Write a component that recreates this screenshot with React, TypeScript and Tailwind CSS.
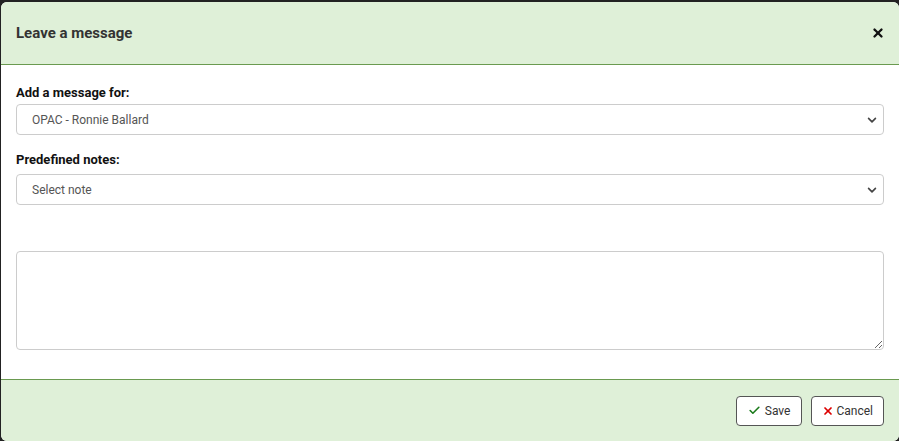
import { Check, X } from 'lucide-react';

function Chevron() {
  return (
    <svg width="10" height="10" viewBox="0 0 16 16" className="text-[#444]">
      <path d="M2.5 5.5l5.5 5.5 5.5-5.5" fill="none" stroke="currentColor" strokeWidth="2.6" strokeLinecap="round" strokeLinejoin="round" />
    </svg>
  );
}

function FakeSelect({ value }: { value: string }) {
  return (
    <div className="flex h-[31px] items-center justify-between rounded-[4px] border border-[#ccc] bg-white pl-[15px] pr-[6px] text-[12px] text-[#555]">
      <span>{value}</span>
      <Chevron />
    </div>
  );
}

export default function App() {
  return (
    <div className="h-[441px] w-[899px] bg-[#222] pl-px pt-[2px] font-['Roboto',sans-serif]">
      <div className="flex h-[439px] flex-col overflow-hidden rounded-[6px] bg-white">
        {/* Header */}
        <div className="flex h-[63px] shrink-0 items-center justify-between border-b border-[#6a9a50] bg-[#dff0d8] pl-[15px] pr-[14px]">
          <h1 className="text-[15px] font-bold text-[#333]">Leave a message</h1>
          <X size={14} strokeWidth={4} className="text-[#111]" />
        </div>

        {/* Body */}
        <div className="flex flex-1 flex-col px-[15px] pt-[20px]">
          <label className="mb-[4px] text-[13px] leading-[15px] font-bold text-[#111]">Add a message for:</label>
          <FakeSelect value="OPAC - Ronnie Ballard" />
          <label className="mb-[7px] mt-[17px] text-[13px] leading-[15px] font-bold text-[#111]">Predefined notes:</label>
          <FakeSelect value="Select note" />
          <textarea className="mt-[46px] h-[99px] resize-y rounded-[4px] border border-[#ccc] bg-white outline-none" />
        </div>

        {/* Footer */}
        <div className="flex h-[62px] shrink-0 items-center justify-end gap-[9px] border-t border-[#6a9a50] bg-[#dff0d8] pr-[15px]">
          <button className="flex h-[30px] items-center gap-[4px] rounded-[4px] border border-[#555] bg-white px-[11px] text-[12px] text-[#333]">
            <Check size={13} strokeWidth={3} className="text-[#1a7a1a]" />
            Save
          </button>
          <button className="flex h-[30px] items-center gap-[2px] rounded-[4px] border border-[#555] bg-white px-[10px] text-[12px] text-[#333]">
            <X size={12} strokeWidth={3.5} className="text-[#d00]" />
            Cancel
          </button>
        </div>
      </div>
    </div>
  );
}
